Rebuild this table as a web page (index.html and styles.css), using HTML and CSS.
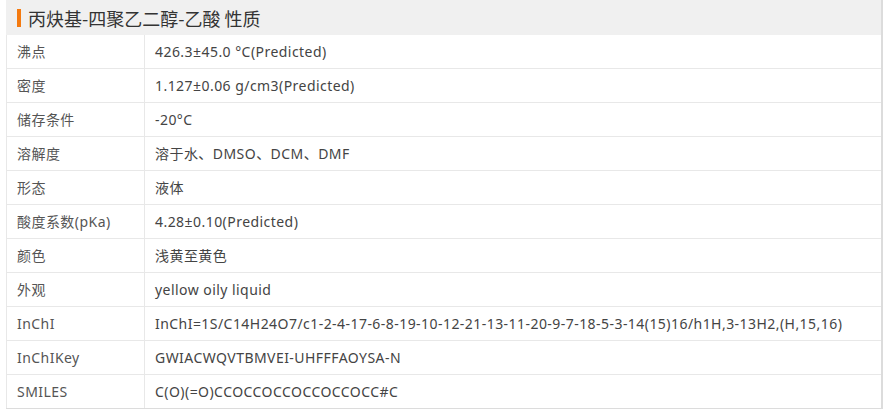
FILE: index.html
```html
<!DOCTYPE html>
<html lang="zh">
<head>
<meta charset="utf-8">
<link rel="stylesheet" href="styles.css">
</head>
<body>
<div class="box">
  <div class="head"><span class="bar"></span><h2 class="title">丙炔基-四聚乙二醇-乙酸 性质</h2></div>
  <table class="props">
    <tr><td class="k">沸点</td><td class="v">426.3±45.0 °C(Predicted)</td></tr>
    <tr><td class="k">密度</td><td class="v">1.127±0.06 g/cm3(Predicted)</td></tr>
    <tr><td class="k">储存条件</td><td class="v">-20°C</td></tr>
    <tr><td class="k">溶解度</td><td class="v">溶于水、DMSO、DCM、DMF</td></tr>
    <tr><td class="k">形态</td><td class="v">液体</td></tr>
    <tr><td class="k">酸度系数(pKa)</td><td class="v">4.28±0.10(Predicted)</td></tr>
    <tr><td class="k">颜色</td><td class="v">浅黄至黄色</td></tr>
    <tr><td class="k">外观</td><td class="v">yellow oily liquid</td></tr>
    <tr><td class="k">InChI</td><td class="v">InChI=1S/C14H24O7/c1-2-4-17-6-8-19-10-12-21-13-11-20-9-7-18-5-3-14(15)16/h1H,3-13H2,(H,15,16)</td></tr>
    <tr><td class="k">InChIKey</td><td class="v">GWIACWQVTBMVEI-UHFFFAOYSA-N</td></tr>
    <tr><td class="k">SMILES</td><td class="v">C(O)(=O)CCOCCOCCOCCOCCOCC#C</td></tr>
  </table>
</div>
</body>
</html>
```
FILE: styles.css
```css
html, body { margin: 0; padding: 0; background: #fff; }
body { font-family: "Noto Sans", "Noto Sans CJK SC", sans-serif; color: #555; }
.box { margin-left: 6px; width: 877px; border-right: 2px solid #dcdcdc; box-sizing: border-box; }
.head { height: 35px; background: #f0f0f0; display: flex; align-items: center; padding-left: 11px; }
.bar { width: 4px; height: 18px; background: #f47a10; margin-right: 7px; }
.title { margin: 0; font-size: 18px; font-weight: normal; color: #333; line-height: 1; font-family: "Noto Sans CJK SC", sans-serif; }
.props { width: 100%; border-collapse: collapse; font-size: 14px; letter-spacing: 0.45px; }
.props td { height: 33px; padding: 0 10px; border-bottom: 1px solid #e8e8e8; vertical-align: middle; line-height: 1; }
.props tr:last-child td { border-bottom: 1px solid #dcdcdc; }
.k { width: 117px; border-left: 1px solid #e8e8e8; border-right: 1px solid #e8e8e8; }
.v { color: #444; }
```
